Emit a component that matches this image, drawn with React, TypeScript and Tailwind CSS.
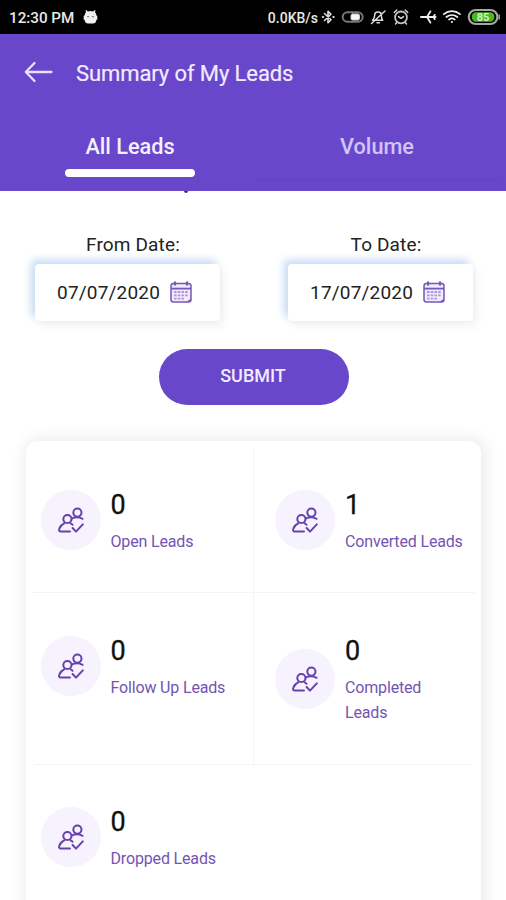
import type { ReactNode } from "react";

const FONT = "font-['Roboto','Liberation_Sans',sans-serif]";

function AndroidHead() {
  return (
    <svg width="15" height="16" viewBox="0 0 15 16" fill="#f2f2f2">
      <path d="M3.2 1 4.8 2.4Q7.5 1.8 10.2 2.4L11.8 1 12.5 1.6 12 3.2Q13.4 4.4 13.4 6.4L14.3 7V10.8H13.4Q13 14.6 10 14.6H5Q2 14.6 1.6 10.8H.7V7L1.6 6.4Q1.6 4.4 3 3.2L2.5 1.6Z" />
      <path d="M4 7.8h2.2M8.8 7.8H11" stroke="#777" strokeWidth="1.1" />
    </svg>
  );
}

function StatusIcons() {
  return (
    <svg width="185" height="20" viewBox="0 0 185 20" fill="none" stroke="#dcdcdc" strokeWidth="1.4" strokeLinecap="round" strokeLinejoin="round">
      {/* bluetooth */}
      <path d="M3.5 6.5 10 12.8 7 15.8V4.2L10 7.2 3.5 13.5" strokeWidth="1.6" />
      <path d="M1.8 10h.4M12.3 10h.4" strokeWidth="2" />
      {/* toggle */}
      <rect x="21.7" y="5.2" width="20" height="9.6" rx="4.8" stroke="#777" strokeWidth="2" />
      <rect x="30" y="7" width="8.5" height="6" rx="1.6" fill="#f8f8f8" stroke="#cfcfcf" strokeWidth="1" />
      {/* muted bell */}
      <path d="M51.5 13.3h10.2c-1.3-1.4-1.3-2.4-1.3-4.6 0-2.2-1.4-3.7-3.4-3.7s-3.4 1.5-3.4 3.7c0 2.2-.8 3.2-2.1 4.6ZM56 15.8h2.4M64 4 50.5 16.5" strokeWidth="1.5" />
      {/* alarm */}
      <circle cx="80" cy="10.4" r="5.9" stroke="#c4c4c4" strokeWidth="1.8" />
      <path d="m73.2 5.4 2.6-2.4M86.8 5.4l-2.6-2.4M75.5 15.8l-1 1.2M84.5 15.8l1 1.2M77.5 9.6l2.5 1.8 2.5-1.8" />
      {/* airplane */}
      <path d="M100 10H114.5" stroke="#f0f0f0" strokeWidth="2" />
      <path d="M106 10 109.5 4.3M106 10l3.5 5.7M112.3 10l1.5-2.2M112.3 10l1.5 2.2" stroke="#f0f0f0" strokeWidth="1.7" />
      {/* wifi */}
      <path d="M122.8 7.2c4.8-4 11.4-4 16.2 0M125.4 10c3.3-2.7 7.7-2.7 11 0M128 12.6c1.7-1.3 4.1-1.3 5.8 0" stroke="#f0f0f0" strokeWidth="1.7" />
      <circle cx="130.9" cy="15" r="1.1" fill="#f0f0f0" stroke="none" />
      {/* battery */}
      <rect x="147.8" y="3" width="28.6" height="14" rx="7" stroke="#a5a5a5" strokeWidth="2.2" />
      <rect x="150.8" y="5.3" width="22.6" height="9.4" rx="4.2" fill="#48b820" stroke="none" />
      <path d="M178.2 8v4" stroke="#a5a5a5" />
      <text x="162" y="14" textAnchor="middle" fill="#d5f2c9" stroke="none" fontSize="11" fontWeight="700" fontFamily="Roboto, sans-serif">85</text>
    </svg>
  );
}

function CalendarIcon() {
  return (
    <svg width="22" height="22" viewBox="0 0 22 22" fill="none" stroke="#7557bb" strokeWidth="1.5" className="-ml-px -mt-[2px]">
      <rect x="1" y="2.5" width="20" height="18.5" rx="2.5" fill="#f1ebfb" />
      <path d="M1 7.6h20" strokeWidth="1.8" />
      <path d="M5 .6v4M17 .6v4" strokeWidth="2.2" />
      <path d="M4 11h14M4 14.3h14M4 17.6h10" stroke="#ad98da" strokeWidth="1.8" strokeDasharray="2.6 1.1" />
      <path d="M16.5 21 21 17.5V21Z" fill="#7557bb" stroke="none" />
    </svg>
  );
}

function LeadsIcon() {
  return (
    <div className="flex size-[60px] shrink-0 items-center justify-center rounded-full bg-[#f6f2fe]">
      <svg width="26" height="26" viewBox="0 0 26 26" fill="none" stroke="#6741ad" strokeWidth="2" strokeLinecap="round" strokeLinejoin="round">
        <circle cx="19.4" cy="5.6" r="4.1" />
        <circle cx="9.4" cy="12" r="4.1" />
        <path d="M14 11.4c3.5-1.6 7.4-1.4 10.6.4" />
        <path d="M12 24.4H2.8C1.2 24.4.8 23.2 1.2 22 2 19.4 3.8 17.6 6.2 16.4" />
        <path d="M12.6 16.4c1 .4 1.5.8 1.9 1.4" />
        <path d="M14.6 21 18 24.6 24.8 17.4" />
      </svg>
    </div>
  );
}

function DateField({ label, value }: { label: string; value: string }) {
  return (
    <div className="flex w-[185px] flex-col items-center">
      <div className="h-[30px] pl-[11px] text-[19px] leading-[22px] tracking-[0.15px] text-[#222]">{label}</div>
      <div className="flex h-[57px] w-full items-center gap-[10px] rounded-[4px] bg-white pl-[22px] shadow-[-4px_-4px_9px_#c4daf2,4px_5px_10px_#f2f2f2]">
        <span className="w-[104px] whitespace-nowrap pt-[2px] text-[19px] tracking-[0.2px] text-[#222]">{value}</span>
        <CalendarIcon />
      </div>
    </div>
  );
}

function StatText({ value, children }: { value: number; children: ReactNode }) {
  return (
    <div className="text-[16px] leading-[25px] tracking-[-0.16px] text-[#7354b4]">
      <div className="mb-[8px] text-[27px] leading-[32px] text-[#111] [-webkit-text-stroke:0.3px_#111]">{value}</div>
      {children}
    </div>
  );
}

function Stat({ value, children, className = "" }: { value: number; children: ReactNode; className?: string }) {
  return (
    <div className={`flex gap-[10px] ${className}`}>
      <LeadsIcon />
      <div className="-mt-px">
        <StatText value={value}>{children}</StatText>
      </div>
    </div>
  );
}

export default function App() {
  return (
    <div className={`flex h-[900px] w-[506px] flex-col overflow-hidden bg-white ${FONT}`}>
      <div className="flex h-[34px] shrink-0 items-center bg-black pl-[9px] text-[#e8e8e8]">
        <span className="w-[74px] whitespace-nowrap pt-[2px] text-[15.2px] font-medium">12:30 PM</span>
        <AndroidHead />
        <span className="ml-auto whitespace-nowrap pr-[3px] pt-[2px] text-[14px] font-medium">0.0KB/s</span>
        <StatusIcons />
      </div>

      <header className="h-[157px] shrink-0 bg-[#6847ca]">
        <div className="flex h-[76px] items-center pl-[24px]">
          <svg width="29" height="22" viewBox="0 0 29 22" fill="none" stroke="#e9dfff" strokeWidth="2.3" strokeLinecap="round" strokeLinejoin="round">
            <path d="M27.5 11H1.8M10.5 2 1.8 11l8.7 9" />
          </svg>
          <h1 className="ml-[23px] pt-[2px] text-[22px] tracking-[-0.1px] text-[#f2ebff] [-webkit-text-stroke:0.2px_#f2ebff]">Summary of My Leads</h1>
        </div>
        <nav className="grid grid-cols-[260px_1fr] text-center text-[21.7px] font-medium leading-[26px]">
          <div className="flex flex-col items-center pt-[24px] text-[#f5efff]">
            All Leads
            <span className="mt-[9px] h-[8px] w-[130px] rounded-full bg-white" />
          </div>
          <div className="flex flex-col pt-[24px] text-[#d2c4f6]">
            <span className="pr-[12px]">Volume</span>
            <span className="-ml-[6px] mr-[6px] mt-[20px] h-px bg-[#6243c2]" />
          </div>
        </nav>
      </header>
      <div className="ml-[184px] h-[2px] w-[4px] shrink-0 rounded-b-full bg-[#42307c]" />

      <div className="flex justify-between pl-[35px] pr-[33px] pt-[41px]">
        <DateField label="From Date:" value="07/07/2020" />
        <DateField label="To Date:" value="17/07/2020" />
      </div>

      <button className="ml-[159px] mt-[28px] h-[56px] w-[190px] shrink-0 rounded-full bg-[#6847ca] pb-[4px] pr-[2px] text-[18px] font-medium text-[#f2ebff]">
        SUBMIT
      </button>

      <section className="ml-[26px] mt-[36px] h-[480px] w-[455px] shrink-0 rounded-t-[12px] bg-white shadow-[2px_0_16px_3px_#ececec]">
        <div className="mx-[6px] grid h-[152px] grid-cols-[222px_1fr] border-b border-[#f4f4f4]">
          <Stat value={0} className="-ml-[6px] mt-[8px] border-r border-[#f4f4f4] pl-[14.5px] pt-[41px]">Open Leads</Stat>
          <Stat value={1} className="pl-[21px] pt-[49px]">Converted Leads</Stat>
        </div>
        <div className="ml-[8px] mr-[10px] grid h-[172px] grid-cols-[220px_1fr] border-b border-[#f4f4f4]">
          <Stat value={0} className="-ml-[8px] border-r border-[#f4f4f4] pl-[14.5px] pt-[43px]">Follow Up Leads</Stat>
          <div className="flex items-center gap-[10px] pl-[21px]">
            <LeadsIcon />
            <div className="pt-[2px]">
              <StatText value={0}>
                Completed
                <br />
                Leads
              </StatText>
            </div>
          </div>
        </div>
        <Stat value={0} className="pl-[14.5px] pt-[42px]">Dropped Leads</Stat>
      </section>
    </div>
  );
}
